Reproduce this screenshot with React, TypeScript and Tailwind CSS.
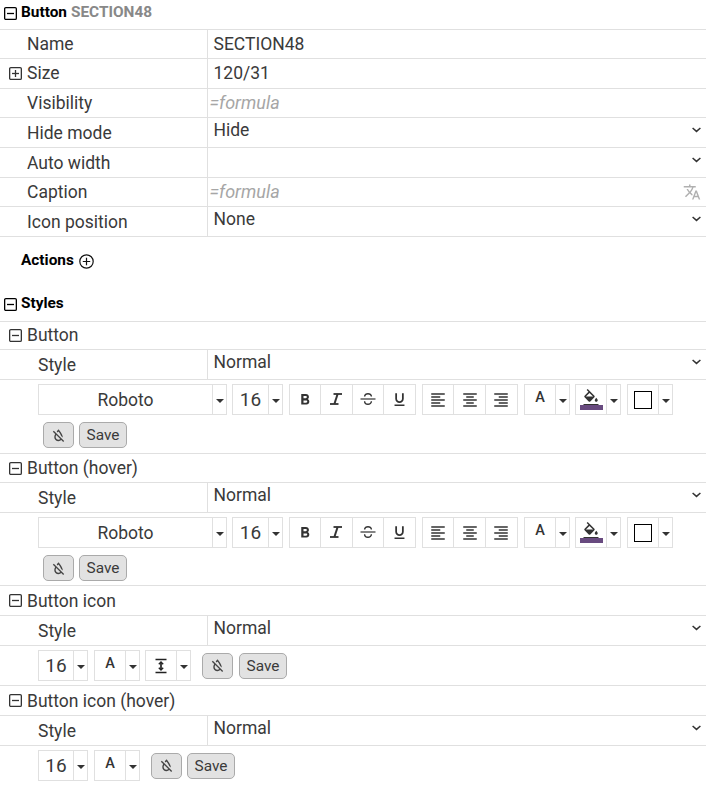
import React from "react";
import {
  MdFormatBold, MdFormatUnderlined,
  MdFormatAlignLeft, MdFormatAlignCenter, MdFormatAlignRight, MdFormatColorFill,
  MdOutlineFormatColorReset, MdTranslate,
} from "react-icons/md";

const Box = ({ plus = false, cls = "text-[#333]" }: { plus?: boolean; cls?: string }) => (
  <svg width="13" height="13" viewBox="0 0 13 13" className={`shrink-0 ${cls}`} fill="none" stroke="currentColor" strokeWidth="1.3">
    <rect x="0.65" y="0.65" width="11.7" height="11.7" rx="1.2" />
    <path d="M3 6.5h7" />
    {plus && <path d="M6.5 3v7" />}
  </svg>
);

const Chevron = () => (
  <svg width="9" height="6" viewBox="0 0 9 6" className="text-[#333]" fill="none" stroke="currentColor" strokeWidth="1.5">
    <path d="M0.6 1l3.9 3.4L8.4 1" />
  </svg>
);

const Row = ({ label, value, formula, select, translate, plus, indent = "pl-[27px]", h = "h-[30px]" }: {
  label: string; value?: string; formula?: boolean; select?: boolean; translate?: boolean; plus?: boolean; indent?: string; h?: string;
}) => (
  <div className={`flex ${h} border-b border-[#e0e0e0] box-border`}>
    <div className={`w-[208px] shrink-0 border-r border-[#e0e0e0] flex items-center text-[17.5px] text-[#3a3a3a] ${plus ? "pl-[9px]" : indent}`}>
      {plus && <span className="flex mr-[5px] -mt-[1px]"><Box plus /></span>}
      <span className={plus ? "" : "pt-[1px]"}>{label}</span>
    </div>
    <div className="flex-1 min-w-0 flex justify-between items-start text-[17.5px] text-[#3a3a3a]">
      {formula ? (
        <span className="ml-[1.5px] mt-[2px] italic text-[#a6a6a6] text-[18px] leading-[24px]">=formula</span>
      ) : (
        <span className={`ml-[5.5px] ${select ? "mt-0" : "mt-[2px]"} leading-[24px]`}>{value}</span>
      )}
      {select && <span className="mr-[5px] mt-[9px] flex"><Chevron /></span>}
      {translate && <MdTranslate className="mr-[5px] mt-[5px] text-[#b0b0b0]" size={18} />}
    </div>
  </div>
);

const Caret = () => (
  <div className="w-[14px] h-full border-l border-[#e0e0e0] flex items-center justify-center pt-[3px]">
    <div className="w-0 h-0 border-x-[4px] border-x-transparent border-t-[4px] border-t-[#333]" />
  </div>
);

const Drop = ({ w, children }: { w: string; children: React.ReactNode }) => (
  <div className={`flex h-[31px] border border-[#e0e0e0] box-border ${w}`}>
    <div className="flex-1 min-w-0 flex items-center justify-center text-[#3a3a3a]">{children}</div>
    <Caret />
  </div>
);

const IconA = () => <span className="text-[14.5px] font-medium text-[#333] leading-none -mt-[2px]">A</span>;

const LineIcon = () => (
  <svg width="14" height="16" viewBox="0 0 14 16" fill="none" stroke="#222">
    <path d="M1.5 1.5h11M1.5 14.5h11" strokeWidth="1.3" />
    <path d="M7 4v8" strokeWidth="1.7" />
    <path d="M4.8 6.2L7 4l2.2 2.2M4.8 9.8L7 12l2.2-2.2" strokeWidth="1.4" />
  </svg>
);

const StrikeIcon = () => (
  <svg width="16" height="16" viewBox="0 0 16 16" fill="none" stroke="#333" strokeWidth="1.4" className="-mt-[2px]">
    <path d="M0.5 8h15" strokeWidth="1.2" />
    <path d="M4.6 5.4C4.6 1.8 11.4 1.8 11.4 5.4" />
    <path d="M4.6 10.2C4.6 14.2 11.4 14.2 11.4 10.2" />
  </svg>
);

const ItalicIcon = () => (
  <svg width="14" height="12" viewBox="0 0 14 12" fill="none" stroke="#333" className="-mt-[1px]">
    <path d="M4.5 1h8.5" strokeWidth="1.8" />
    <path d="M1 11h8.5" strokeWidth="1.8" />
    <path d="M8.6 1L5.4 11" strokeWidth="2" />
  </svg>
);

const Cell = ({ children, last }: { children: React.ReactNode; last?: boolean }) => (
  <div className={`w-[32px] h-full flex items-center justify-center text-[#333] ${last ? "" : "border-r border-[#e0e0e0]"}`}>{children}</div>
);

const ColorDrop = () => <Drop w="w-[46px]"><IconA /></Drop>;

const FillDrop = () => (
  <Drop w="w-[46px]">
    <div className="flex flex-col items-center mt-[2px]">
      <MdFormatColorFill size={18} className="text-[#333] -mt-[2px]" />
      <div className="w-[23px] h-[5px] bg-[#684a7f] -mt-[2px]" />
    </div>
  </Drop>
);

const BorderDrop = () => (
  <Drop w="w-[46px]"><div className="w-[18px] h-[18px] border border-black" /></Drop>
);

const ResetButton = () => (
  <button className="w-[31px] h-[26px] rounded-[5px] bg-[#e2e2e2] border border-[#aaa] flex items-center justify-center text-[#444]">
    <MdOutlineFormatColorReset size={17} />
  </button>
);

const SaveButton = () => (
  <button className="w-[48px] h-[26px] rounded-[5px] bg-[#e2e2e2] border border-[#aaa] flex items-center justify-center pt-[2px] text-[15.4px] text-[#3a3a3a]">
    Save
  </button>
);

const Group = ({ w, children }: { w: string; children: React.ReactNode }) => (
  <div className={`flex h-[31px] border border-[#e0e0e0] box-border ${w}`}>{children}</div>
);

const FullToolbar = ({ h }: { h: string }) => (
  <div className={`${h} border-b border-[#e0e0e0] box-border pl-[38px] pt-[4px]`}>
    <div className="flex items-center">
      <Drop w="w-[189px]"><span className="text-[17.5px] pt-[1px]">Roboto</span></Drop>
      <div className="w-[5px]" />
      <Drop w="w-[51px]"><span className="text-[19px] pt-[1px]">16</span></Drop>
      <div className="w-[6px]" />
      <Group w="w-[127px]">
        <Cell><MdFormatBold size={18} /></Cell>
        <Cell><ItalicIcon /></Cell>
        <Cell><StrikeIcon /></Cell>
        <Cell last><MdFormatUnderlined size={17} /></Cell>
      </Group>
      <div className="w-[6px]" />
      <Group w="w-[96px]">
        <Cell><MdFormatAlignLeft size={18} /></Cell>
        <Cell><MdFormatAlignCenter size={18} /></Cell>
        <Cell last><MdFormatAlignRight size={18} /></Cell>
      </Group>
      <div className="w-[6px]" />
      <ColorDrop />
      <div className="w-[5px]" />
      <FillDrop />
      <div className="w-[6px]" />
      <BorderDrop />
    </div>
    <div className="flex gap-[5px] pl-[5px] mt-[7px]">
      <ResetButton />
      <SaveButton />
    </div>
  </div>
);

const IconToolbar = ({ hover }: { hover?: boolean }) => (
  <div className={`h-[40px] ${hover ? "" : "border-b border-[#e0e0e0]"} box-border pl-[38px] pt-[4px] flex items-start`}>
    <Drop w="w-[50px]"><span className="text-[19px] pt-[1px]">16</span></Drop>
    <div className="w-[6px]" />
    <ColorDrop />
    {!hover && <div className="w-[5px]" />}
    {!hover && <Drop w="w-[46px]"><LineIcon /></Drop>}
    <div className="w-[11px]" />
    <div className={`flex ${hover ? "gap-[5px]" : "gap-[6px]"} h-[31px] items-center`}>
      <ResetButton />
      <SaveButton />
    </div>
  </div>
);

const SubHeader = ({ label, h, low }: { label: string; h: string; low?: boolean }) => (
  <div className={`${h} border-b border-[#e0e0e0] box-border flex items-center text-[17.5px] text-[#3a3a3a]`}>
    <span className="ml-[9px] mr-[5px] flex"><Box /></span>
    <span className={low ? "pt-[1px]" : ""}>{label}</span>
  </div>
);

const StyleRow = () => <Row label="Style" value="Normal" select indent="pl-[38px]" />;

export default function App() {
  return (
    <div className="w-[706px] h-[785px] overflow-hidden bg-white font-['Roboto',sans-serif]">
      <div className="h-[30px] border-b border-[#e0e0e0] box-border pt-[4px] text-[15.4px] font-bold">
        <div className="flex items-center h-[18px]">
          <span className="ml-[3.5px] mr-[4.5px] flex"><Box cls="text-black" /></span>
          <span className="text-black">Button</span>
          <span className="text-[#888] ml-[4px]">SECTION48</span>
        </div>
      </div>
      <Row label="Name" value="SECTION48" h="h-[29px]" />
      <Row label="Size" value="120/31" plus />
      <Row label="Visibility" formula h="h-[29px]" />
      <Row label="Hide mode" value="Hide" select />
      <Row label="Auto width" select />
      <Row label="Caption" formula translate h="h-[29px]" />
      <Row label="Icon position" value="None" select />
      <div className="h-[85px] border-b border-[#e0e0e0] box-border pt-[15px] text-[15.4px] font-bold text-black">
        <div className="flex items-center gap-[5px] h-[18px] pl-[21px]">
          Actions
          <svg width="15" height="15" viewBox="0 0 15 15" fill="none" stroke="#111" strokeWidth="1.2">
            <circle cx="7.5" cy="7.5" r="6.7" />
            <path d="M3.8 7.5h7.4M7.5 3.8v7.4" />
          </svg>
        </div>
        <div className="flex items-center gap-[4.5px] h-[18px] pl-[3.5px] mt-[25px]">
          <Box cls="text-black" />
          Styles
        </div>
      </div>
      <SubHeader label="Button" h="h-[28px]" />
      <StyleRow />
      <FullToolbar h="h-[74px]" />
      <SubHeader label="Button (hover)" h="h-[29px]" />
      <StyleRow />
      <FullToolbar h="h-[73px]" />
      <SubHeader label="Button icon" h="h-[30px]" low />
      <StyleRow />
      <IconToolbar />
      <SubHeader label="Button icon (hover)" h="h-[30px]" low />
      <StyleRow />
      <IconToolbar hover />
    </div>
  );
}
